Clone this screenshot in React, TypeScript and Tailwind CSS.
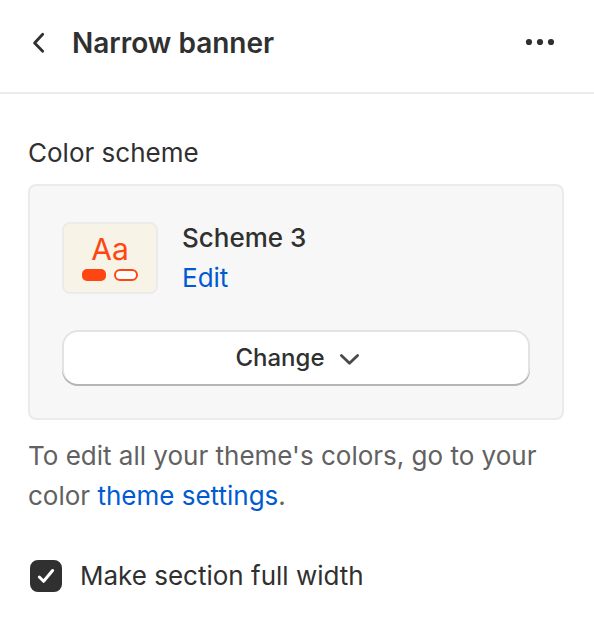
import React, { useState } from 'react';

// ============================================================
// TYPES
// ============================================================

interface ColorScheme {
  name: string;
}

interface SchemePickerProps {
  scheme: ColorScheme;
}

interface CheckboxFieldProps {
  id: string;
  label: string;
  defaultChecked?: boolean;
}

// ============================================================
// HEADER
// ============================================================

function PanelHeader({ title }: { title: string }) {
  return (
    <header className="flex h-[94px] items-center border-b-2 border-[#ebebeb] pr-8 pb-[6px] pl-5">
      <button type="button" aria-label="Back" className="flex h-10 w-10 items-center justify-center">
        <svg
          className="h-10 w-10"
          viewBox="0 0 40 40"
          fill="none"
          stroke="#303030"
          strokeWidth="2.8"
          strokeLinecap="round"
          strokeLinejoin="round"
        >
          <path d="M22.7 11.3 L14.6 20 L22.7 28.3" />
        </svg>
      </button>
      <h1 className="ml-3 flex-1 text-[28px] leading-10 font-semibold">{title}</h1>
      <button type="button" aria-label="More actions" className="flex h-10 w-10 items-center justify-center">
        <svg className="h-10 w-10" viewBox="0 0 40 40" fill="#303030">
          <circle cx="7" cy="19" r="3.1" />
          <circle cx="18" cy="19" r="3.1" />
          <circle cx="29" cy="19" r="3.1" />
        </svg>
      </button>
    </header>
  );
}

// ============================================================
// COLOR SCHEME
// ============================================================

function SchemeSwatch() {
  return (
    <div className="flex h-[72px] w-24 flex-col items-center rounded-lg border-2 border-[#ebebeb] bg-[#f7f3e6] pt-2">
      <span className="text-[30px] leading-[34px] text-[#ff4612]">Aa</span>
      <div className="mt-[3px] flex gap-2">
        <span className="h-3 w-6 rounded-[5px] bg-[#ff4612]" />
        <span className="h-3 w-6 rounded-md border-2 border-[#ff4612] bg-white" />
      </div>
    </div>
  );
}

function SchemePicker({ scheme }: SchemePickerProps) {
  return (
    <div className="rounded-lg border-2 border-[#ebebeb] bg-[#f7f7f7] p-8">
      <div className="flex items-center gap-6">
        <SchemeSwatch />
        <div className="flex flex-col items-start">
          <span className="font-medium">{scheme.name}</span>
          <a href="#edit" className="text-[#005bd3]">
            Edit
          </a>
        </div>
      </div>
      <button
        type="button"
        className="mt-8 flex h-14 w-full items-center justify-center gap-3 rounded-2xl bg-white pl-1 text-2xl font-medium shadow-[inset_0_-2px_0_0_#b5b5b5,inset_0_0_0_2px_#e3e3e3]"
      >
        Change
        <svg
          className="h-6 w-6"
          viewBox="0 0 24 24"
          fill="none"
          stroke="#4a4a4a"
          strokeWidth="2.8"
          strokeLinecap="round"
          strokeLinejoin="round"
        >
          <path d="M4.4 9.4 L12.5 17.3 L20.6 9.4" />
        </svg>
      </button>
    </div>
  );
}

// ============================================================
// CHECKBOX
// ============================================================

function CheckboxField({ id, label, defaultChecked = false }: CheckboxFieldProps) {
  const [checked, setChecked] = useState(defaultChecked);

  return (
    <div className="flex items-center gap-[18px] pl-[2px]">
      <span className="relative flex h-8 w-8">
        <input
          id={id}
          type="checkbox"
          checked={checked}
          onChange={(e) => setChecked(e.target.checked)}
          className="h-8 w-8 appearance-none rounded-lg border-2 border-[#8a8a8a] bg-white checked:border-[#303030] checked:bg-[#303030]"
        />
        {checked && (
          <svg
            className="pointer-events-none absolute inset-0 h-8 w-8"
            viewBox="0 0 32 32"
            fill="none"
            stroke="#ffffff"
            strokeWidth="3"
            strokeLinecap="round"
            strokeLinejoin="round"
          >
            <path d="M9.3 17 L13.6 21.3 L22.6 10.5" />
          </svg>
        )}
      </span>
      <label htmlFor={id}>{label}</label>
    </div>
  );
}

// ============================================================
// COMPONENT
// ============================================================

export default function App() {
  return (
    <div className="min-h-screen bg-white font-['Inter',sans-serif] text-[26px] leading-10 text-[#303030]">
      <PanelHeader title="Narrow banner" />

      <main className="pt-[39px] pr-[30px] pb-10 pl-7">
        <h2 className="mb-[11px]">Color scheme</h2>
        <SchemePicker scheme={{ name: 'Scheme 3' }} />
        <p className="mt-4 text-[#616161]">
          To edit all your theme's colors, go to your color{' '}
          <a href="#theme-settings" className="text-[#005bd3]">
            theme settings
          </a>
          .
        </p>

        <div className="mt-10">
          <CheckboxField id="full-width" label="Make section full width" defaultChecked />
        </div>
      </main>
    </div>
  );
}
